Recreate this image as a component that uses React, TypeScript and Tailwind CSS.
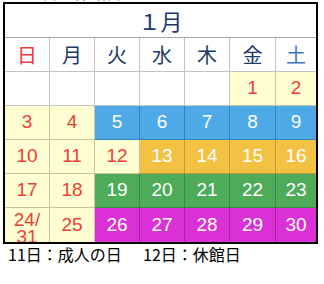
import React from 'react';

type Cell = { label?: string; bg: string; text: string; line: string };

const Y = { bg: 'bg-[#fffdd2]', text: 'text-[#ec3f38]', line: 'border-[#c9c49c]' };
const W = { bg: 'bg-white', text: 'text-[#ec3f38]', line: 'border-[#c4c4c4]' };
const BLUE = { bg: 'bg-[#4ea9e7]', text: 'text-white', line: 'border-[#3a83b8]' };
const ORANGE = { bg: 'bg-[#f4c243]', text: 'text-white', line: 'border-[#c29a34]' };
const GREEN = { bg: 'bg-[#4dab5a]', text: 'text-white', line: 'border-[#3b8746]' };
const PINK = { bg: 'bg-[#da30d6]', text: 'text-white', line: 'border-[#a826a5]' };

const c = (label: string | undefined, s: typeof Y): Cell => ({ label, ...s });

const rows: Cell[][] = [
  [c(undefined, W), c(undefined, W), c(undefined, W), c(undefined, W), c(undefined, W), c('1', Y), c('2', Y)],
  [c('3', Y), c('4', Y), c('5', BLUE), c('6', BLUE), c('7', BLUE), c('8', BLUE), c('9', BLUE)],
  [c('10', Y), c('11', Y), c('12', Y), c('13', ORANGE), c('14', ORANGE), c('15', ORANGE), c('16', ORANGE)],
  [c('17', Y), c('18', Y), c('19', GREEN), c('20', GREEN), c('21', GREEN), c('22', GREEN), c('23', GREEN)],
  [c('24/31', Y), c('25', Y), c('26', PINK), c('27', PINK), c('28', PINK), c('29', PINK), c('30', PINK)],
];

const weekdays = [
  { d: '日', cls: 'text-[#ee3a3a]' },
  { d: '月', cls: 'text-[#1d3768]' },
  { d: '火', cls: 'text-[#1d3768]' },
  { d: '水', cls: 'text-[#1d3768]' },
  { d: '木', cls: 'text-[#1d3768]' },
  { d: '金', cls: 'text-[#1d3768]' },
  { d: '土', cls: 'text-[#3a78c8]' },
];

const jp = { fontFamily: '"Noto Sans CJK JP", "Liberation Sans", sans-serif' };
const num = { fontFamily: '"Liberation Sans", "Noto Sans CJK JP", sans-serif' };

export default function App() {
  return (
    <div className="w-[324px] h-[284px] bg-white overflow-hidden">
      {/* bottom edge of the previous month's note, cut off by the frame */}
      <div className="h-[2px] overflow-hidden pl-[24px]">
        <div className="mt-[-17px] text-[16px] leading-[19px] text-[#555]" style={jp}>
          12日：休館日
        </div>
      </div>
      <div className="ml-[3px] w-[315px] border-2 border-black">
        <div
          className="h-[34px] flex items-center justify-center border-b border-[#a8a8a8] text-[22px] text-[#1d3768]"
          style={jp}
        >
          １月
        </div>
        <div className="grid grid-cols-[45px_45px_45px_45px_45px_46px_40px]">
          {weekdays.map((w, i) => (
            <div
              key={w.d}
              className={`h-[34px] flex items-center justify-center border-b border-[#c4c4c4] text-[20px] ${w.cls} ${
                i < 6 ? 'border-r' : ''
              }`}
              style={jp}
            >
              {w.d}
            </div>
          ))}
          {rows.map((row, r) =>
            row.map((cell, i) => (
              <div
                key={`${r}-${i}`}
                className={`h-[34px] flex items-center justify-center overflow-hidden ${cell.bg} ${cell.text} ${cell.line} ${
                  i < 6 ? 'border-r' : ''
                } ${r < 4 ? 'border-b' : ''}`}
                style={num}
              >
                {cell.label === '24/31' ? (
                  <div className="text-[19px] leading-[17px] text-center mt-[6px]">
                    24/
                    <br />
                    31
                  </div>
                ) : (
                  <span className="text-[19px]">{cell.label}</span>
                )}
              </div>
            ))
          )}
        </div>
      </div>
      <div className="flex pl-[8px] text-[16px] leading-[20px] text-black" style={jp}>
        <span className="w-[135px]">11日：成人の日</span>
        <span>12日：休館日</span>
      </div>
    </div>
  );
}
